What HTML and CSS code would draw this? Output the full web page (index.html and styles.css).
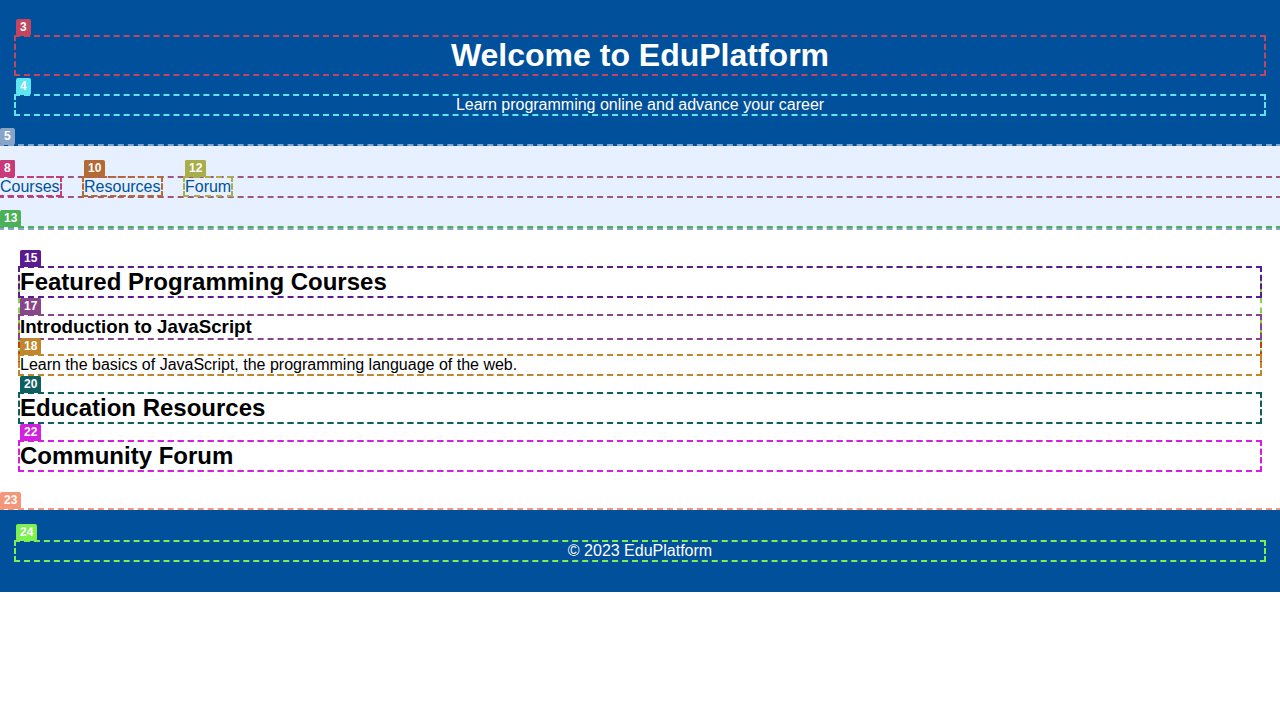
FILE: index.html
```html
<!DOCTYPE html>
<html lang="en">
<head>
<meta charset="utf-8">
<title>EduPlatform</title>
<link rel="stylesheet" href="styles.css">
</head>
<body>
<header class="site-header box c2">
  <h1 class="box c3" data-n="3">Welcome to EduPlatform</h1>
  <p class="box c4" data-n="4">Learn programming online and advance your career</p>
</header>
<nav class="site-nav box c5" data-n="5">
  <ul class="nav-list box c6" data-n="6">
    <li class="nav-item box c7" data-n="7"><a class="nav-link box c8" data-n="8" href="#courses">Courses</a></li>
    <li class="nav-item box c9" data-n="9"><a class="nav-link box c10" data-n="10" href="#resources">Resources</a></li>
    <li class="nav-item box c11" data-n="11"><a class="nav-link box c12" data-n="12" href="#forum">Forum</a></li>
  </ul>
</nav>
<main class="site-main box c13" data-n="13">
  <section id="courses" class="box c14" data-n="14">
    <h2 class="box c15" data-n="15">Featured Programming Courses</h2>
    <div class="course box c16" data-n="16">
      <h3 class="box c17" data-n="17">Introduction to JavaScript</h3>
      <p class="box c18" data-n="18">Learn the basics of JavaScript, the programming language of the web.</p>
    </div>
  </section>
  <section id="resources" class="box c19" data-n="19">
    <h2 class="box c20" data-n="20">Education Resources</h2>
  </section>
  <section id="forum" class="box c21" data-n="21">
    <h2 class="box c22" data-n="22">Community Forum</h2>
  </section>
</main>
<footer class="site-footer box c23" data-n="23">
  <p class="box c24" data-n="24">&copy; 2023 EduPlatform</p>
</footer>
</body>
</html>
```

FILE: styles.css
```css
html, body {
  margin: 0;
  padding: 0;
  background: #ffffff;
}

body {
  font-family: "Liberation Sans", Arial, sans-serif;
  color: #000000;
}

.site-header {
  background: #00509b;
  color: #ffffff;
  text-align: center;
  padding: 16px;
}

.site-nav {
  background: #e6f0ff;
  padding: 16px 0;
}

.nav-list {
  list-style: none;
  margin: 16px 0;
  padding: 0;
}

.nav-item {
  display: inline;
  margin-right: 20px;
}

.nav-link {
  color: #00509b;
  text-decoration: none;
}

.site-main {
  padding: 20px;
}

.site-footer {
  background: #00509b;
  color: #ffffff;
  text-align: center;
  padding: 16px;
}

/* debug overlay boxes */
.box {
  position: relative;
  outline: 2px dashed var(--c);
}

.box[data-n]::before {
  content: attr(data-n);
  position: absolute;
  left: 0;
  bottom: calc(100% + 1px);
  background: var(--c);
  color: #ffffff;
  font-family: "Liberation Sans", Arial, sans-serif;
  font-size: 12px;
  font-weight: bold;
  line-height: 15px;
  padding: 1px 4px;
  border-radius: 2px;
  text-align: left;
  white-space: nowrap;
}

.c2 { --c: #3e3e2c; }
.c3 { --c: #c4455f; }
.c4 { --c: #5ee6f0; }
.c5 { --c: #88a4c6; }
.c6 { --c: #9a5a78; }
.c7 { --c: #c03a72; }
.c8 { --c: #c83a78; }
.c9 { --c: #c4505e; }
.c10 { --c: #b46a34; }
.c11 { --c: #a9ad4a; }
.c12 { --c: #a9ad4a; }
.c13 { --c: #4caf5a; }
.c14 { --c: #88d050; }
.c15 { --c: #5a1a90; }
.c16 { --c: #c04012; }
.c17 { --c: #87458a; }
.c18 { --c: #c0862e; }
.c19 { --c: #2a6a5a; }
.c20 { --c: #0e6060; }
.c21 { --c: #c030d0; }
.c22 { --c: #d41ee0; }
.c23 { --c: #f5967a; }
.c24 { --c: #7ef050; }
```
